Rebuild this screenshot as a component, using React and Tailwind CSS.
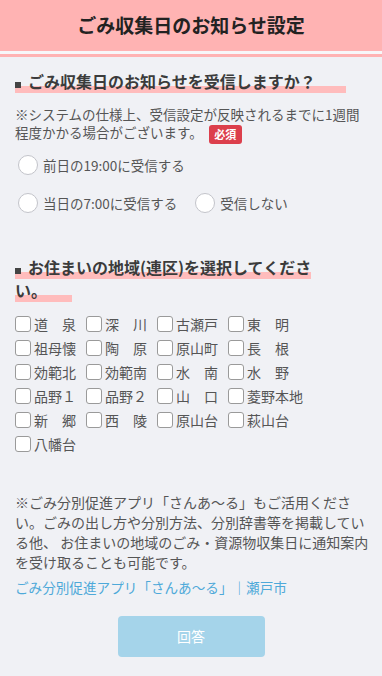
import React, { useState } from 'react';

const AREAS = [
  '道　泉', '深　川', '古瀬戸', '東　明',
  '祖母懐', '陶　原', '原山町', '長　根',
  '効範北', '効範南', '水　南', '水　野',
  '品野１', '品野２', '山　口', '菱野本地',
  '新　郷', '西　陵', '原山台', '萩山台',
  '八幡台',
];

function Heading({ children, className = '', pad = 'pr-[30px]' }) {
  return (
    <h2 className={`text-[16px] leading-[23px] font-bold text-[#3b3b3b] ${className}`}>
      <span className={`bg-[linear-gradient(transparent_72%,#ffbcbc_72%)] ${pad}`}>
        <span className="inline-block w-[6px] h-[6px] bg-[#444] mr-[7px] align-middle relative top-[1px]" />
        {children}
      </span>
    </h2>
  );
}

function Radio({ label, checked, onClick, className = '' }) {
  return (
    <label onClick={onClick} className={`flex items-center gap-[5px] cursor-pointer ${className}`}>
      <span className="w-[20px] h-[20px] rounded-full border border-[#c3c4ca] bg-white flex items-center justify-center">
        {checked && <span className="w-[10px] h-[10px] rounded-full bg-[#4ea9d9]" />}
      </span>
      <span className="text-[13.5px] text-[#555]">{label}</span>
    </label>
  );
}

export default function App() {
  const [timing, setTiming] = useState(null);
  const [areas, setAreas] = useState([]);

  const toggle = (a) =>
    setAreas((s) => (s.includes(a) ? s.filter((x) => x !== a) : [...s, a]));

  return (
    <div className="min-h-[676px] bg-[#f0f1f5] font-['Noto_Sans_CJK_JP',sans-serif]">
      <header className="h-[51px] bg-[#ffb3b3] flex items-center justify-center text-[19px] font-bold text-[#222]">
        ごみ収集日のお知らせ設定
      </header>
      <div className="h-[3px] bg-[#f7f7f9]" />
      <div className="h-[3px] bg-[#ffb3b3]" />

      <main className="px-[15px]">
        <Heading className="mt-[13px]" pad="pr-[30px]">ごみ収集日のお知らせを受信しますか？</Heading>

        <p className="mt-[12px] text-[13.5px] leading-[18px] text-[#555] whitespace-nowrap">
          ※システムの仕様上、受信設定が反映されるまでに1週間
          <br />
          程度かかる場合がございます。
          <span className="inline-block ml-[6px] w-[33px] h-[19px] leading-[19px] rounded-[3px] bg-[#dc3f4c] text-white text-[11px] font-bold text-center align-middle">
            必須
          </span>
        </p>

        <div className="mt-[11px]">
          <div className="flex">
            <Radio className="ml-[3px]" label="前日の19:00に受信する" checked={timing === 'prev'} onClick={() => setTiming('prev')} />
          </div>
          <div className="flex mt-[18px]">
            <Radio className="ml-[3px] mr-[18px]" label="当日の7:00に受信する" checked={timing === 'day'} onClick={() => setTiming('day')} />
            <Radio label="受信しない" checked={timing === 'none'} onClick={() => setTiming('none')} />
          </div>
        </div>

        <Heading className="mt-[43px]" pad="pr-[25px]">
          お住まいの地域(連区)を選択してくださ
          <br />
          い。
        </Heading>

        <div className="mt-[10px] grid grid-cols-[71px_71px_71px_1fr]">
          {AREAS.map((a) => (
            <label key={a} onClick={() => toggle(a)} className="h-[24px] flex items-center gap-[3px] cursor-pointer">
              <span className="w-[16px] h-[16px] rounded-[3px] border-[1.5px] border-[#9a9a9a] bg-white flex items-center justify-center text-[11px] leading-none text-[#4ea9d9]">
                {areas.includes(a) ? '✓' : ''}
              </span>
              <span className="text-[14px] text-[#555] whitespace-nowrap">{a}</span>
            </label>
          ))}
        </div>

        <p className="mt-[36px] text-[14px] leading-[20px] text-[#555] whitespace-nowrap">
          ※ごみ分別促進アプリ「さんあ～る」もご活用くださ
          <br />
          い。ごみの出し方や分別方法、分別辞書等を掲載してい
          <br />
          る他、 お住まいの地域のごみ・資源物収集日に通知案内
          <br />
          を受け取ることも可能です。
        </p>

        <p className="mt-[5px] text-[13.6px] leading-[20px] text-[#4ea9d9] whitespace-nowrap">
          ごみ分別促進アプリ「さんあ～る」｜瀬戸市
        </p>

        <button className="block mx-auto mt-[19px] w-[147px] h-[41px] rounded-[4px] bg-[#a5d4ea] text-white text-[14px]">
          回答
        </button>
      </main>
    </div>
  );
}
